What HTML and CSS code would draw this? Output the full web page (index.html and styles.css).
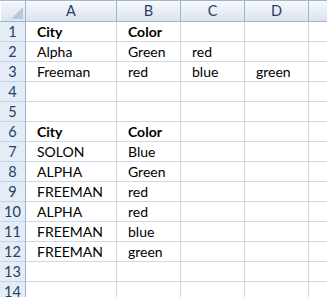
FILE: index.html
```html
<!DOCTYPE html>
<html>
<head>
<meta charset="utf-8">
<link rel="stylesheet" href="styles.css">
</head>
<body>
<div class="sheet">
  <div class="corner"><svg class="corner-mark" width="12" height="12" viewBox="0 0 12 12"><polygon points="12,0 12,12 0,12" /></svg></div>
  <div class="colhead">A</div>
  <div class="colhead">B</div>
  <div class="colhead">C</div>
  <div class="colhead">D</div>
  <div class="colhead last"></div>

  <div class="rowhead">1</div><div class="cell b">City</div><div class="cell b">Color</div><div class="cell"></div><div class="cell"></div><div class="cell last"></div>
  <div class="rowhead">2</div><div class="cell">Alpha</div><div class="cell">Green</div><div class="cell">red</div><div class="cell"></div><div class="cell last"></div>
  <div class="rowhead">3</div><div class="cell">Freeman</div><div class="cell">red</div><div class="cell">blue</div><div class="cell">green</div><div class="cell last"></div>
  <div class="rowhead">4</div><div class="cell"></div><div class="cell"></div><div class="cell"></div><div class="cell"></div><div class="cell last"></div>
  <div class="rowhead">5</div><div class="cell"></div><div class="cell"></div><div class="cell"></div><div class="cell"></div><div class="cell last"></div>
  <div class="rowhead">6</div><div class="cell b">City</div><div class="cell b">Color</div><div class="cell"></div><div class="cell"></div><div class="cell last"></div>
  <div class="rowhead">7</div><div class="cell">SOLON</div><div class="cell">Blue</div><div class="cell"></div><div class="cell"></div><div class="cell last"></div>
  <div class="rowhead">8</div><div class="cell">ALPHA</div><div class="cell">Green</div><div class="cell"></div><div class="cell"></div><div class="cell last"></div>
  <div class="rowhead">9</div><div class="cell">FREEMAN</div><div class="cell">red</div><div class="cell"></div><div class="cell"></div><div class="cell last"></div>
  <div class="rowhead">10</div><div class="cell">ALPHA</div><div class="cell">red</div><div class="cell"></div><div class="cell"></div><div class="cell last"></div>
  <div class="rowhead">11</div><div class="cell">FREEMAN</div><div class="cell">blue</div><div class="cell"></div><div class="cell"></div><div class="cell last"></div>
  <div class="rowhead">12</div><div class="cell">FREEMAN</div><div class="cell">green</div><div class="cell"></div><div class="cell"></div><div class="cell last"></div>
  <div class="rowhead">13</div><div class="cell"></div><div class="cell"></div><div class="cell"></div><div class="cell"></div><div class="cell last"></div>
  <div class="rowhead">14</div><div class="cell"></div><div class="cell"></div><div class="cell"></div><div class="cell"></div><div class="cell last"></div>
</div>
</body>
</html>
```
FILE: styles.css
```css
html, body {
  margin: 0;
  padding: 0;
  background: #ffffff;
  overflow: hidden;
}

.sheet {
  display: grid;
  grid-template-columns: 26px 91px 64px 64px 64px 1fr;
  grid-template-rows: 21px repeat(14, 20px);
  width: 327px;
  font-family: Lato, "Liberation Sans", sans-serif;
  font-size: 14px;
  color: #000000;
  border-top: 1px solid #9eb6ce;
  box-sizing: border-box;
}

.sheet > div {
  box-sizing: border-box;
}

.corner {
  grid-row: 1;
  position: relative;
  background: linear-gradient(#f3f6fb, #dbe4ef);
  border-right: 1px solid #9eb6ce;
  border-bottom: 1px solid #9eb6ce;
  box-shadow: inset 1px 1px 0 #ffffff;
}

.corner-mark {
  position: absolute;
  right: 2px;
  bottom: 2px;
}

.corner-mark polygon {
  fill: #b8c8da;
}

.colhead {
  grid-row: 1;
  background: linear-gradient(#f7f9fc 0%, #e9eef5 50%, #dbe3ee 100%);
  border-right: 1px solid #9eb6ce;
  border-bottom: 1px solid #9eb6ce;
  color: #27415f;
  font-size: 14.5px;
  text-align: center;
  line-height: 20px;
}

.rowhead {
  background: #e4ecf7;
  border-right: 1px solid #9eb6ce;
  border-bottom: 1px solid #c5d4e6;
  color: #27415f;
  font-size: 14.5px;
  text-align: center;
  line-height: 19px;
}

.cell {
  border-right: 1px solid #d0d7e5;
  border-bottom: 1px solid #d0d7e5;
  padding-left: 11px;
  line-height: 19px;
  white-space: nowrap;
  overflow: hidden;
}

.cell.last, .colhead.last {
  border-right: none;
}

.b {
  font-weight: bold;
}
```
